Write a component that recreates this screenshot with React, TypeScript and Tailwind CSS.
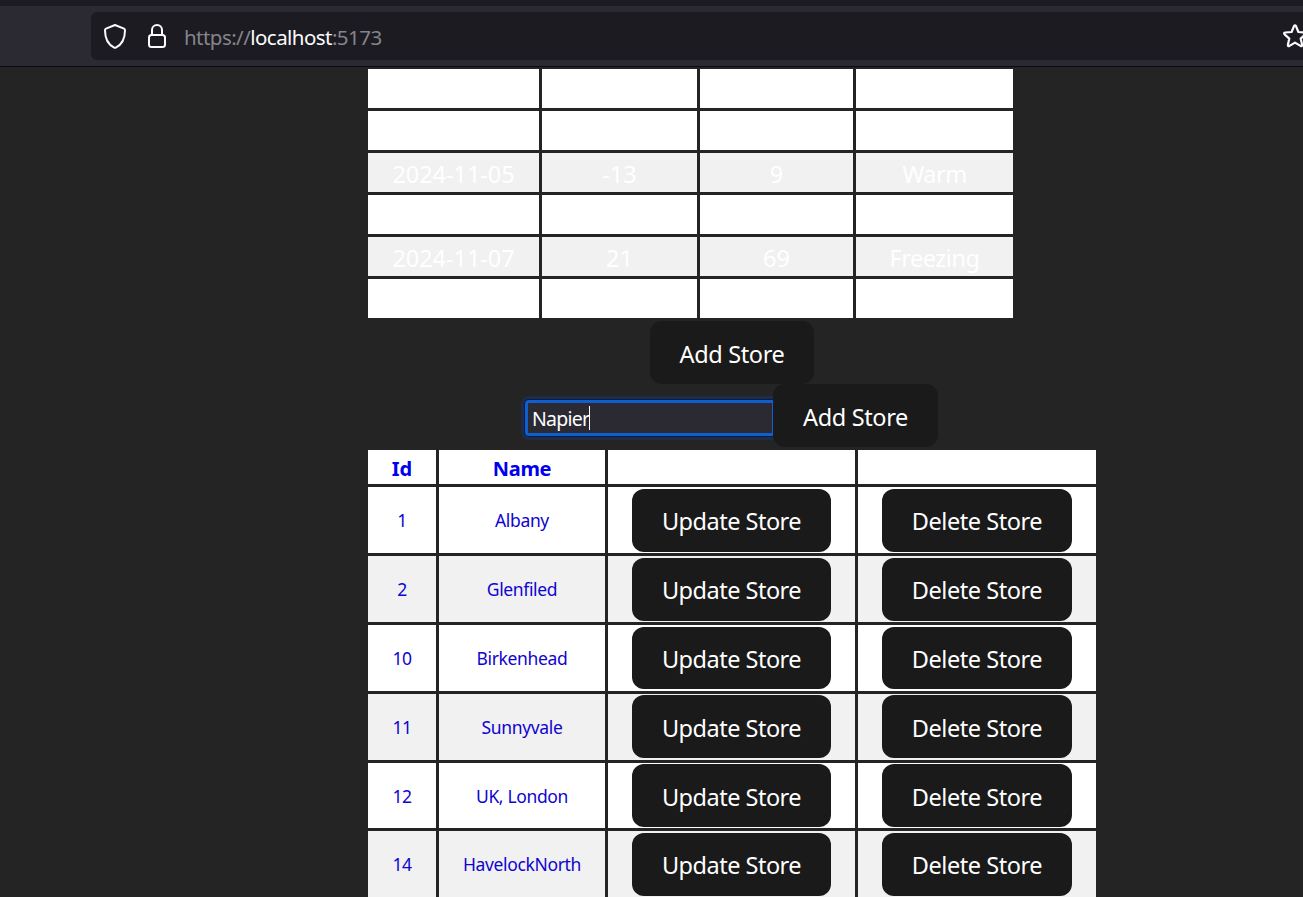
import React from 'react';

const forecasts = [
  { cells: ['', '', '', ''], bg: 'bg-white' },
  { cells: ['', '', '', ''], bg: 'bg-white' },
  { cells: ['2024-11-05', '-13', '9', 'Warm'], bg: 'bg-[#f1f1f1]' },
  { cells: ['', '', '', ''], bg: 'bg-white' },
  { cells: ['2024-11-07', '21', '69', 'Freezing'], bg: 'bg-[#f1f1f1]' },
  { cells: ['', '', '', ''], bg: 'bg-white' },
];

const stores = [
  { id: '1', name: 'Albany', height: 'h-[66px]', bg: 'bg-white', pad: 'pt-[2px]', btn: 'h-[63px] pt-[2px]' },
  { id: '2', name: 'Glenfiled', height: 'h-[66px]', bg: 'bg-[#f1f1f1]', pad: 'pt-[2px]', btn: 'h-[63px] pt-[2px]' },
  { id: '10', name: 'Birkenhead', height: 'h-[66px]', bg: 'bg-white', pad: 'pt-[2px]', btn: 'h-[62px] pt-[4px]' },
  { id: '11', name: 'Sunnyvale', height: 'h-[66px]', bg: 'bg-[#f1f1f1]', pad: 'pt-px', btn: 'h-[63px] pt-[4px]' },
  { id: '12', name: 'UK, London', height: 'h-[65px]', bg: 'bg-white', pad: 'pt-px', btn: 'h-[63px] pt-[4px]' },
  { id: '14', name: 'HavelockNorth', height: 'h-[66px]', bg: 'bg-[#f1f1f1]', pad: 'pt-[2px]', btn: 'h-[63px] pt-[2px]' },
];

function Button({ label, className }: { label: string; className: string }) {
  return (
    <button
      className={`flex shrink-0 items-center justify-center rounded-[12px] bg-[#1a1a1a] text-[23.5px] leading-none whitespace-nowrap text-white ${className}`}
    >
      {label}
    </button>
  );
}

function AddressBar() {
  return (
    <header className="h-[67px] shrink-0 border-b border-[#0c0c0d] bg-[#2b2a33]">
      <div className="h-[6px] bg-[#1c1b22]" />
      <div className="mt-[6px] ml-[91px] flex h-[48px] items-center rounded-l-[6px] bg-[#1c1b22] pl-[12px]">
        <svg className="h-[26px] w-[24px] shrink-0" viewBox="0 0 24 26" fill="none" stroke="#fbfbfe" strokeWidth="2" strokeLinejoin="round">
          <path d="M12 2 L21 5.6 Q22 6.1 22 7.2 C22 15.5 19 21.5 12.8 24.6 Q12 25 11.2 24.6 C5 21.5 2 15.5 2 7.2 Q2 6.1 3 5.6 Z" />
        </svg>
        <svg className="ml-[20px] h-[26px] w-[20px] shrink-0" viewBox="0 0 20 26" fill="none" stroke="#fbfbfe" strokeWidth="2">
          <rect x="2" y="12" width="16" height="12" rx="2.5" />
          <path d="M5 12 V7 A5 5 0 0 1 15 7 V12" />
        </svg>
        <div className="ml-[17px] grow pt-[2px] text-[20.5px] leading-none tracking-[-0.55px] whitespace-nowrap text-[#85848b]">
          https://<span className="text-[#fbfbfe]">localhost</span>:5173
        </div>
        <svg className="-mr-[5px] h-[26px] w-[26px] shrink-0" viewBox="0 0 26 26" fill="none" stroke="#fbfbfe" strokeWidth="2.2" strokeLinejoin="round">
          <path d="M12 3.2 Q13 1.6 14 3.2 L16.4 9 L22.8 9.5 Q24.7 9.9 23.4 11.4 L18.7 15.6 L20.1 21.8 Q20.2 23.7 18.5 22.9 L13 19.6 L7.5 22.9 Q5.8 23.7 5.9 21.8 L7.3 15.6 L2.6 11.4 Q1.3 9.9 3.2 9.5 L9.6 9 Z" />
        </svg>
      </div>
    </header>
  );
}

function ForecastTable() {
  return (
    <div className="ml-[368px] flex w-[645px] flex-col gap-[3px] pt-[2px]">
      {forecasts.map((r, i) => (
        <div key={i} className="grid h-[39px] grid-cols-[171px_155px_153px_157px] gap-x-[3px] text-[23.5px] leading-none text-white">
          {r.cells.map((v, j) => (
            <div key={j} className={`flex items-center justify-center pt-[4px] ${j === 3 ? 'tracking-[-0.5px]' : 'tracking-[-0.05px]'} ${r.bg}`}>
              {v}
            </div>
          ))}
        </div>
      ))}
    </div>
  );
}

const storeColumns = 'grid grid-cols-[68px_166px_247px_238px] gap-x-[3px]';

function StoreTable() {
  return (
    <div className="mt-[3px] ml-[368px] flex w-[728px] flex-col gap-[3px]">
      <div className={`${storeColumns} h-[34px] text-[20px] leading-none font-bold text-[#0000ee]`}>
        <div className="flex items-center justify-center bg-white pt-[3px]">Id</div>
        <div className="flex items-center justify-center bg-white pt-[3px] tracking-[-0.3px]">Name</div>
        <div className="bg-white" />
        <div className="bg-white" />
      </div>
      {stores.map((s) => (
        <div key={s.id} className={`${storeColumns} ${s.height} text-[17.5px] leading-none text-[#0f04d0]`}>
          <div className={`flex items-center justify-center pt-[2px] tracking-[-0.4px] ${s.bg}`}>{s.id}</div>
          <div className={`flex items-center justify-center pt-[2px] tracking-[-0.35px] ${s.bg}`}>{s.name}</div>
          <div className={`flex items-start pl-[24px] ${s.pad} ${s.bg}`}>
            <Button label="Update Store" className={`w-[199px] tracking-[-0.5px] ${s.btn}`} />
          </div>
          <div className={`flex items-start pl-[24px] ${s.pad} ${s.bg}`}>
            <Button label="Delete Store" className={`w-[190px] tracking-[-0.45px] ${s.btn}`} />
          </div>
        </div>
      ))}
    </div>
  );
}

export default function App() {
  return (
    <div className="flex h-[897px] w-[1303px] flex-col overflow-hidden bg-[#242424] font-['Noto_Sans',sans-serif]">
      <AddressBar />
      <main className="min-h-0 grow overflow-hidden">
        <ForecastTable />
        <div className="mt-[3px] ml-[650px]">
          <Button label="Add Store" className="h-[63px] w-[164px] pt-[4px] tracking-[-0.35px]" />
        </div>
        <div className="ml-[525px] flex">
          <div className="mt-[16px] flex h-[36px] w-[248px] items-center rounded-[4px] rounded-r-none border-[3px] border-r-[1px] border-[#0f5fd0] bg-[#2b2a33] pl-[4px] shadow-[0_0_0_1px_#0d1c38,0_0_0_4px_#1c2c4a]">
            <span className="pt-[2px] text-[19.5px] leading-none tracking-[-0.75px] text-white">Napier</span>
            <span className="h-[24px] w-px bg-white" />
          </div>
          <Button label="Add Store" className="relative h-[63px] w-[165px] pt-[4px] tracking-[-0.35px]" />
        </div>
        <StoreTable />
      </main>
    </div>
  );
}
